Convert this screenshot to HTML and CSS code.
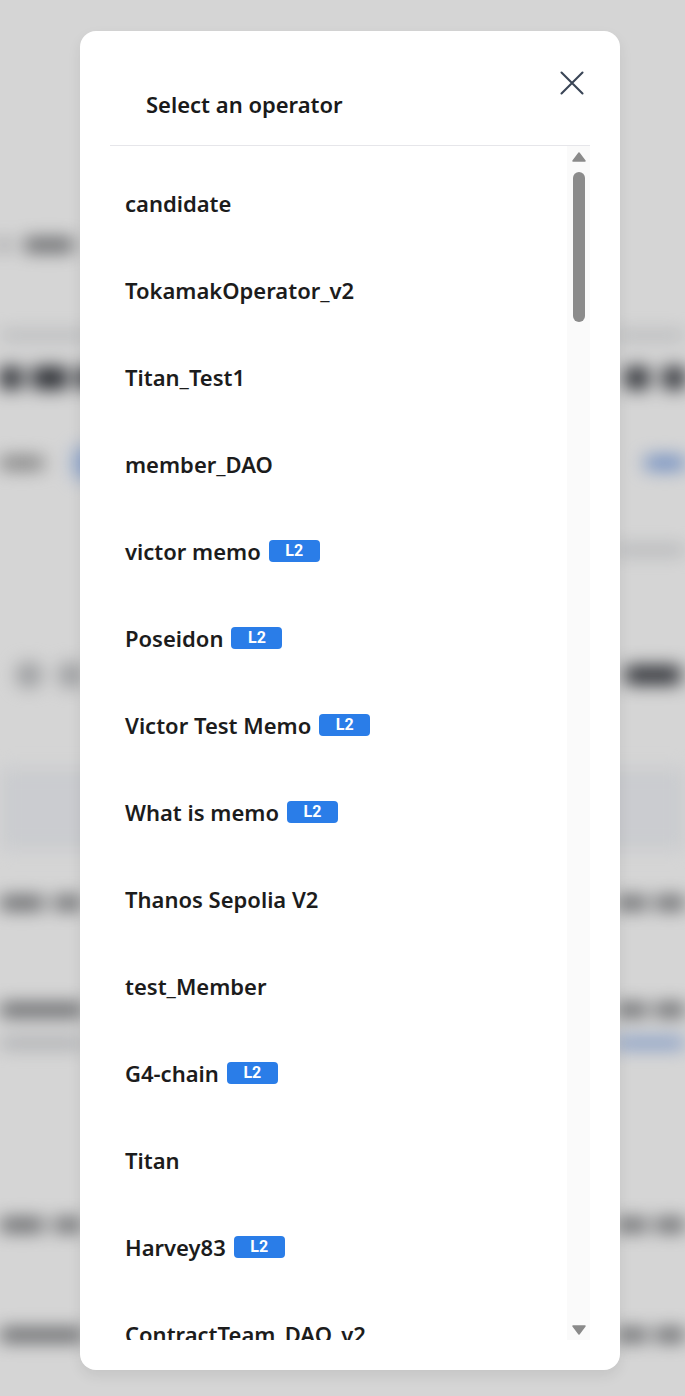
FILE: index.html
```html
<!DOCTYPE html>
<html lang="en">
<head>
<meta charset="utf-8">
<title>Select an operator</title>
<link rel="stylesheet" href="styles.css">
</head>
<body>
<div class="page" aria-hidden="true">
  <div class="bgrow r1"><span class="bar mid w6"></span><span class="bar mid w50 ml18"></span></div>
  <div class="bgrow r2"><span class="bar light w90"></span><span class="bar light w70"></span></div>
  <div class="bgrow r3"><div class="grp"><span class="bar dark w22"></span><span class="bar dark w36 ml10"></span><span class="bar dark w20 ml10"></span></div><div class="grp"><span class="bar dark w24"></span><span class="bar dark w22 ml14"></span></div></div>
  <div class="bgrow r4"><div class="grp"><span class="bar mid2 w44"></span><span class="pill"></span></div><span class="bar blue w40"></span></div>
  <div class="bgrow r5"><span></span><span class="bar light w70"></span></div>
  <div class="bgrow r6"><div class="grp"><span class="coin ml16"></span><span class="coin ml16"></span></div><span class="bar dark w56 mr4"></span></div>
  <div class="thead"></div>
  <div class="bgrow r7"><div class="grp"><span class="bar mid w44"></span><span class="bar mid w28 ml10"></span></div><div class="grp"><span class="bar mid w30"></span><span class="bar mid w30 ml8"></span></div></div>
  <div class="bgrow r8"><div class="grp"><span class="bar mid w84"></span></div><div class="grp"><span class="bar mid w30"></span><span class="bar mid w30 ml8"></span></div></div>
  <div class="bgrow r8s"><div class="grp"><span class="bar light w84"></span></div><span class="bar blue w70"></span></div>
  <div class="bgrow r9"><div class="grp"><span class="bar mid w44"></span><span class="bar mid w28 ml10"></span></div><div class="grp"><span class="bar mid w30"></span><span class="bar mid w30 ml8"></span></div></div>
  <div class="bgrow r10"><div class="grp"><span class="bar mid w84"></span></div><div class="grp"><span class="bar mid w30"></span><span class="bar mid w30 ml8"></span></div></div>
</div>
<div class="overlay"></div>

<div class="modal">
  <div class="modal-head">
    <h2 class="title">Select an operator</h2>
    <button class="close" aria-label="Close">
      <svg width="24" height="24" viewBox="0 0 24 24"><path d="M1.5 1.5 L22.5 22.5 M22.5 1.5 L1.5 22.5" stroke="#3a4556" stroke-width="2.1" stroke-linecap="round" fill="none"/></svg>
    </button>
  </div>
  <div class="list-wrap">
    <ul class="list">
      <li class="item">candidate</li>
      <li class="item">TokamakOperator_v2</li>
      <li class="item">Titan_Test1</li>
      <li class="item">member_DAO</li>
      <li class="item">victor memo <span class="badge">L2</span></li>
      <li class="item">Poseidon <span class="badge">L2</span></li>
      <li class="item">Victor Test Memo <span class="badge">L2</span></li>
      <li class="item">What is memo <span class="badge">L2</span></li>
      <li class="item">Thanos Sepolia V2</li>
      <li class="item">test_Member</li>
      <li class="item">G4-chain <span class="badge">L2</span></li>
      <li class="item">Titan</li>
      <li class="item">Harvey83 <span class="badge">L2</span></li>
      <li class="item">ContractTeam_DAO_v2</li>
    </ul>
    <div class="scrollbar">
      <svg class="arrow up" width="14" height="10" viewBox="0 0 14 10"><path d="M7 1 L13 9 L1 9 Z" fill="#8a8a8a" stroke="#8a8a8a" stroke-width="1.5" stroke-linejoin="round"/></svg>
      <div class="thumb"></div>
      <div class="track-fill"></div>
      <svg class="arrow down" width="14" height="10" viewBox="0 0 14 10"><path d="M1 1 L13 1 L7 9 Z" fill="#8a8a8a" stroke="#8a8a8a" stroke-width="1.5" stroke-linejoin="round"/></svg>
    </div>
  </div>
</div>
</body>
</html>
```

FILE: styles.css
```css
* { box-sizing: border-box; }
html, body { margin: 0; padding: 0; }
body {
  width: 685px;
  height: 1396px;
  overflow: hidden;
  background: #ffffff;
  font-family: "Noto Sans", "Open Sans", sans-serif;
  position: relative;
}

/* blurred page behind the modal */
.page {
  filter: blur(9px);
  padding-top: 235px;
  width: 685px;
}
.bgrow {
  display: flex;
  justify-content: space-between;
  align-items: center;
}
.grp { display: flex; align-items: center; }
.bar { display: block; border-radius: 4px; height: 100%; }
.bar.dark { background: #2c2f36; }
.bar.mid { background: #5d5f63; }
.bar.mid2 { background: #8a8a8a; }
.bar.light { background: #b8bbc0; }
.bar.blue { background: #6a96e2; }
.w6 { width: 6px; } .w20 { width: 20px; } .w22 { width: 22px; } .w24 { width: 24px; }
.w28 { width: 28px; } .w30 { width: 30px; } .w36 { width: 36px; } .w40 { width: 40px; }
.w44 { width: 44px; } .w50 { width: 50px; } .w56 { width: 56px; } .w70 { width: 70px; }
.w84 { width: 84px; } .w90 { width: 90px; }
.ml8 { margin-left: 8px; } .ml10 { margin-left: 10px; } .ml14 { margin-left: 14px; }
.ml16 { margin-left: 16px; } .ml18 { margin-left: 18px; } .mr4 { margin-right: 4px; }

.r1 { height: 20px; justify-content: flex-start; }
.r1 .bar { height: 12px; }
.r2 { height: 8px; margin-top: 76px; }
.r2 .bar { height: 5px; }
.r3 { height: 26px; margin-top: 26px; }
.r3 .bar { height: 22px; }
.r4 { height: 30px; margin-top: 57px; }
.r4 .bar { height: 12px; }
.pill {
  display: block;
  width: 60px;
  height: 32px;
  margin-left: 29px;
  border-radius: 8px;
  background: #a9c5f4;
}
.r5 { height: 8px; margin-top: 68px; }
.r5 .bar { height: 6px; }
.r6 { height: 26px; margin-top: 108px; }
.r6 .bar { height: 18px; }
.coin {
  display: block;
  width: 26px;
  height: 26px;
  border-radius: 50%;
  background: #b8babd;
}
.thead {
  margin-top: 80px;
  height: 82px;
  background: #f3f5f9;
}
.r7 { height: 16px; margin-top: 45px; }
.r8 { height: 16px; margin-top: 91px; }
.r8s { height: 10px; margin-top: 20px; }
.r9 { height: 16px; margin-top: 169px; }
.r10 { height: 16px; margin-top: 94px; }
.r7 .bar, .r8 .bar, .r9 .bar, .r10 .bar { height: 12px; }
.r8s .bar { height: 8px; }

.overlay {
  position: absolute;
  inset: 0;
  background: rgba(0, 0, 0, 0.165);
}

/* modal */
.modal {
  position: absolute;
  left: 80px;
  top: 31px;
  width: 540px;
  height: 1339px;
  background: #ffffff;
  border-radius: 16px;
  box-shadow: 0 6px 14px rgba(0, 0, 0, 0.08);
  padding: 0 30px 30px 30px;
  display: flex;
  flex-direction: column;
}
.modal-head {
  height: 115px;
  border-bottom: 1px solid #e6e6ea;
  display: flex;
  justify-content: space-between;
  align-items: flex-start;
  flex: none;
}
.title {
  margin: 59px 0 0 36px;
  font-size: 22px;
  line-height: 28px;
  font-weight: 600;
  color: #1a1a1a;
}
.close {
  margin: 40px 6px 0 0;
  padding: 0;
  border: 0;
  background: none;
  width: 24px;
  height: 24px;
  display: block;
}
.close svg { display: block; }

.list-wrap {
  flex: 1;
  display: flex;
  min-height: 0;
  overflow: hidden;
}
.list {
  list-style: none;
  margin: 0;
  padding: 13px 0 0 15px;
  flex: 1;
  overflow: hidden;
}
.item {
  height: 87px;
  display: flex;
  align-items: center;
  font-size: 22px;
  font-weight: 600;
  color: #1c1c1c;
  white-space: nowrap;
}
.badge {
  display: inline-flex;
  align-items: center;
  justify-content: center;
  margin-left: 8px;
  width: 51px;
  height: 22px;
  border-radius: 4px;
  background: #2a7de8;
  color: #ffffff;
  font-family: Roboto, "Noto Sans", sans-serif;
  font-size: 16px;
  font-weight: 700;
}

.scrollbar {
  width: 23px;
  flex: none;
  background: #fafafa;
  display: flex;
  flex-direction: column;
  align-items: center;
}
.arrow { display: block; flex: none; }
.arrow.up { margin-top: 6px; }
.thumb {
  margin-top: 10px;
  width: 12px;
  height: 150px;
  border-radius: 6px;
  background: #8b8b8b;
  flex: none;
}
.track-fill { flex: 1; }
.arrow.down { margin-bottom: 5px; }
```
